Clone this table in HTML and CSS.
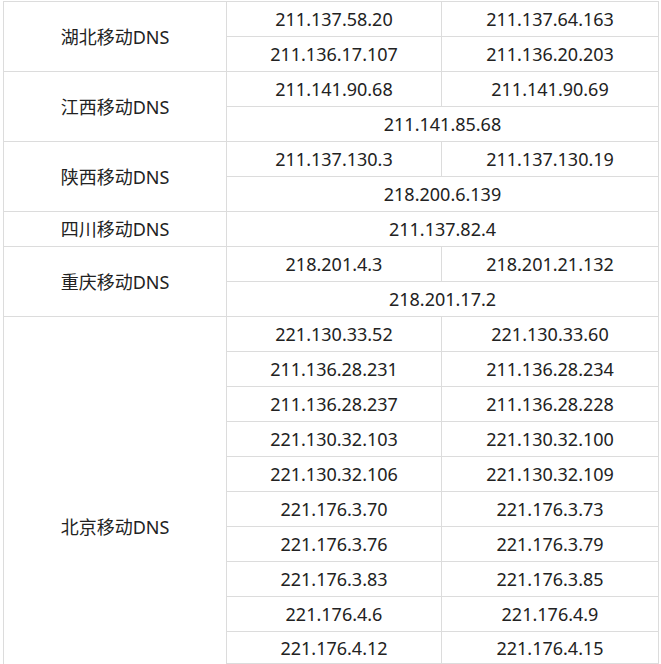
FILE: index.html
```html
<!DOCTYPE html>
<html lang="zh-CN">
<head>
<meta charset="utf-8">
<title>移动DNS</title>
<link rel="stylesheet" href="styles.css">
</head>
<body>
<div class="wrap">
<table class="dns">
<colgroup><col class="c1"><col class="c2"><col class="c3"></colgroup>
<tbody>
<tr><td rowspan="2">湖北移动DNS</td><td>211.137.58.20</td><td>211.137.64.163</td></tr>
<tr><td>211.136.17.107</td><td>211.136.20.203</td></tr>
<tr><td rowspan="2">江西移动DNS</td><td>211.141.90.68</td><td>211.141.90.69</td></tr>
<tr><td colspan="2">211.141.85.68</td></tr>
<tr><td rowspan="2">陕西移动DNS</td><td>211.137.130.3</td><td>211.137.130.19</td></tr>
<tr><td colspan="2">218.200.6.139</td></tr>
<tr><td>四川移动DNS</td><td colspan="2">211.137.82.4</td></tr>
<tr><td rowspan="2">重庆移动DNS</td><td>218.201.4.3</td><td>218.201.21.132</td></tr>
<tr><td colspan="2">218.201.17.2</td></tr>
<tr><td rowspan="12">北京移动DNS</td><td>221.130.33.52</td><td>221.130.33.60</td></tr>
<tr><td>211.136.28.231</td><td>211.136.28.234</td></tr>
<tr><td>211.136.28.237</td><td>211.136.28.228</td></tr>
<tr><td>221.130.32.103</td><td>221.130.32.100</td></tr>
<tr><td>221.130.32.106</td><td>221.130.32.109</td></tr>
<tr><td>221.176.3.70</td><td>221.176.3.73</td></tr>
<tr><td>221.176.3.76</td><td>221.176.3.79</td></tr>
<tr><td>221.176.3.83</td><td>221.176.3.85</td></tr>
<tr><td>221.176.4.6</td><td>221.176.4.9</td></tr>
<tr class="short"><td>221.176.4.12</td><td>221.176.4.15</td></tr>
<tr class="tail"><td></td><td></td></tr>
<tr class="tail"><td></td><td></td></tr>
</tbody>
</table>
</div>
</body>
</html>
```

FILE: styles.css
```css
html, body {
  margin: 0;
  padding: 0;
  background: #fff;
}
.wrap {
  padding: 1px 0 0 3px;
}
.dns {
  border-collapse: collapse;
  table-layout: fixed;
  width: 655px;
  font-family: "Noto Sans", "Noto Sans CJK SC", sans-serif;
  font-size: 18px;
  color: #222;
}
.c1 { width: 223px; }
.c2 { width: 215px; }
.c3 { width: 217px; }
.dns td {
  border: 1px solid #dcdcdc;
  padding: 0;
  height: 34px;
  text-align: center;
  vertical-align: middle;
  line-height: 20px;
  white-space: nowrap;
}
.dns tr.short td {
  height: 31px;
}
.dns tr.tail td {
  height: 36px;
}
```
